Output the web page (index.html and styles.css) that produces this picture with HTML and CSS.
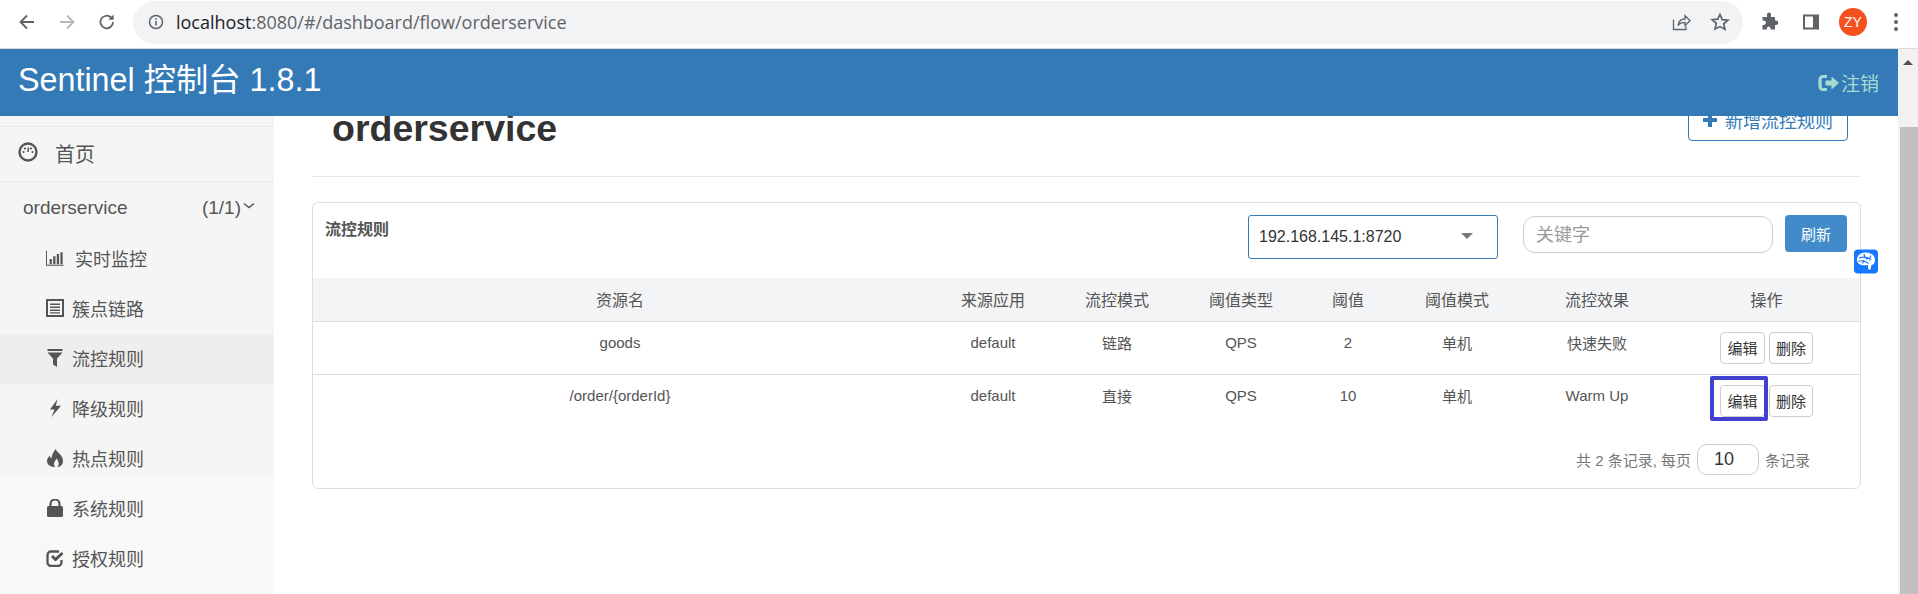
FILE: index.html
```html
<!DOCTYPE html>
<html>
<head>
    <meta charset="utf-8" />
    <title>Sentinel 控制台</title>
    <link rel="stylesheet" href="styles.css">
</head>
<body>
    <!--Browser toolbar-->
    <div class="toolbar">
        <svg class="tool-icon" viewBox="0 0 20 20"><path d="M17 10H4M10 3.5 3.5 10l6.5 6.5" fill="none" stroke="#5f6368" stroke-width="1.8"/></svg>
        <svg class="tool-icon" viewBox="0 0 20 20"><path d="M3 10h13M10 3.5l6.5 6.5-6.5 6.5" fill="none" stroke="#b4b6b9" stroke-width="1.8"/></svg>
        <svg class="tool-icon" viewBox="0 0 20 20"><path d="M16 10a6.3 6.3 0 1 1-1.9-4.5" fill="none" stroke="#5f6368" stroke-width="1.8"/><path d="M16.6 2.6v5.2h-5.2z" fill="#5f6368"/></svg>
        <div class="address">
            <svg class="info-icon" viewBox="0 0 16 16"><circle cx="8" cy="8" r="6.5" fill="none" stroke="#5f6368" stroke-width="1.5"/><path d="M7.2 7h1.6v4.6H7.2zM7.2 4.2h1.6v1.6H7.2z" fill="#5f6368"/></svg>
            <span class="url"><span class="url-host">localhost</span>:8080/#/dashboard/flow/orderservice</span>
            <svg class="share-icon" viewBox="0 0 20 20"><path d="M2.5 7.5v10h12.5v-3M7 13.5c.5-4 3-6.500 7-6.500V3.500l5 5.200-5 5V10.300c-3 0-5.500 1-7 3.200z" fill="none" stroke="#5f6368" stroke-width="1.300"/></svg>
            <svg class="star-icon" viewBox="0 0 20 20"><path d="M10 2.500l2.300 5.200 5.600.5-4.200 3.700 1.300 5.500L10 14.600l-5 2.300 1.300-5.500-4.200-3.700 5.600-.5z" fill="none" stroke="#5f6368" stroke-width="1.700"/></svg>
        </div>
        <svg class="puzzle-icon" viewBox="0 0 20 20"><path d="M8 2.500a2 2 0 0 1 4 0V5h4v3.500h1a2.300 2.300 0 0 1 0 4.600h-1V17.500H11.500v-1.300a1.800 1.800 0 0 0-3.600 0v1.300H3.500V13h1.200a2.200 2.200 0 0 0 0-4.400H3.500V5H8z" fill="#5f6368"/></svg>
        <svg class="panel-icon" viewBox="0 0 18 18"><rect x="1" y="1.500" width="16" height="15" fill="#5f6368"/><rect x="3" y="3.500" width="8" height="11" fill="#fff"/></svg>
        <span class="avatar">ZY</span>
        <svg class="dots-icon" viewBox="0 0 6 20"><circle cx="3" cy="3" r="2" fill="#5f6368"/><circle cx="3" cy="10" r="2" fill="#5f6368"/><circle cx="3" cy="17" r="2" fill="#5f6368"/></svg>
    </div>

    <div class="window">
        <div class="app">
            <div class="navbar">
                <span class="brand">Sentinel 控制台 1.8.1</span>
                <span class="logout">
                    <svg class="logout-icon" viewBox="0 0 22 18"><path d="M9 2.500H5A3 3 0 0 0 2 5.500v7a3 3 0 0 0 3 3h4" fill="none" stroke="#a5dcd2" stroke-width="3.200"/><path d="M7.500 6.500h6V2.500L21 9l-7.500 6.500v-4h-6z" fill="#a5dcd2"/></svg>
                    注销
                </span>
            </div>
            <div class="body">
                <!--Sidebar-->
                <div class="sidebar">
                    <div class="home">
                        <svg class="home-icon" viewBox="0 0 20 20"><circle cx="10" cy="10" r="8.500" fill="none" stroke="#555" stroke-width="2.400"/><circle cx="5.500" cy="10" r="1.100" fill="#555"/><circle cx="7" cy="6.500" r="1.100" fill="#555"/><circle cx="13" cy="6.500" r="1.100" fill="#555"/><circle cx="14.500" cy="10" r="1.100" fill="#555"/><path d="M10.500 5.500 10 10" stroke="#555" stroke-width="1.600"/></svg>
                        首页
                    </div>
                    <div class="app-row">
                        <span>orderservice</span>
                        <span class="app-count">(1/1)<svg class="chevron" viewBox="0 0 12 8"><path d="M1 1.500l5 4 5-4" fill="none" stroke="#555" stroke-width="1.500"/></svg></span>
                    </div>
                    <div class="menu-item">
                        <svg class="menu-icon" viewBox="0 0 20 18"><path d="M.5 1v16h19" fill="none" stroke="#555" stroke-width="1.200"/><path d="M4 10h2.500v6H4zM8 7h2.500v9H8zM12 4.500h2.500V16H12zM16 2.500h2.500V16H16z" fill="#555"/></svg>
                        <span class="menu-text-wide">实时监控</span>
                    </div>
                    <div class="menu-item">
                        <svg class="menu-icon" viewBox="0 0 18 18"><rect x="1" y="1" width="16" height="16" fill="none" stroke="#555" stroke-width="2"/><path d="M4 4.500h10v1.500H4zM4 7.500h10V9H4zM4 10.500h10V12H4zM4 13.200h10v1.300H4z" fill="#555"/></svg>
                        簇点链路
                    </div>
                    <div class="menu-item active">
                        <svg class="menu-icon" viewBox="0 0 18 18"><path d="M1.500 0h15v2h-15zM1.500 3.500h15L11 9.500V18l-4-2.500v-6z" fill="#555"/></svg>
                        流控规则
                    </div>
                    <div class="menu-item">
                        <svg class="menu-icon" viewBox="0 0 18 18"><path d="M11.500 0 4 10.500h4.500L5.500 18 15 6.800h-5.200z" fill="#555"/></svg>
                        降级规则
                    </div>
                    <div class="menu-item">
                        <svg class="menu-icon" viewBox="0 0 18 18"><path d="M9.500 0c1.500 3.500 7.500 6 7.500 12 0 3.500-2.500 6-5.500 6 2-2.500 1.500-5.500-1-8.500-.5 2-2.500 3-2.500 5.500 0 1.300.5 2.300 1.300 3C5 18 1 16 1 12c0-2.500 1.500-4 2.800-5.500.2 1.500.7 2.300 1.700 3C5.500 6 7.500 3 9.500 0z" fill="#555"/></svg>
                        热点规则
                    </div>
                    <div class="menu-item">
                        <svg class="menu-icon" viewBox="0 0 18 18"><path d="M4.500 7.500V5a4.500 4.500 0 0 1 9 0v2.500" fill="none" stroke="#555" stroke-width="2.200"/><rect x="1" y="7" width="16" height="11" rx="1.500" fill="#555"/></svg>
                        系统规则
                    </div>
                    <div class="menu-item">
                        <svg class="menu-icon" viewBox="0 0 18 18"><path d="M13 2.500H5A3.500 3.500 0 0 0 1.500 6v7.500A3.500 3.500 0 0 0 5 17h7a3.500 3.500 0 0 0 3.500-3.500V11" fill="none" stroke="#555" stroke-width="2.300"/><path d="M5 8l2-2 2.500 2.500L15.500 3l2 2-8 7.500z" fill="#555"/></svg>
                        授权规则
                    </div>
                </div>

                <!--Content-->
                <div class="main">
                    <div class="page-head">
                        <h1 class="page-title">orderservice</h1>
                        <button class="add-btn">
                            <svg class="add-icon" viewBox="0 0 14 14"><path d="M5 0h4v5h5v4H9v5H5V9H0V5h5z" fill="#337ab7"/></svg>
                            新增流控规则
                        </button>
                    </div>
                    <div class="panel">
                        <div class="panel-head">
                            <span class="panel-title">流控规则</span>
                            <div class="select">
                                <span>192.168.145.1:8720</span>
                                <i class="caret"></i>
                            </div>
                            <div class="search">关键字</div>
                            <button class="refresh-btn">刷新</button>
                        </div>
                        <table class="rules">
                            <colgroup>
                                <col class="col-res"><col class="col-app"><col class="col-mode"><col class="col-app">
                                <col class="col-val"><col class="col-cluster"><col class="col-effect"><col class="col-ops">
                            </colgroup>
                            <thead>
                                <tr>
                                    <th>资源名</th><th>来源应用</th><th>流控模式</th><th>阈值类型</th>
                                    <th>阈值</th><th>阈值模式</th><th>流控效果</th><th class="ops">操作</th>
                                </tr>
                            </thead>
                            <tbody>
                                <tr>
                                    <td>goods</td><td>default</td><td>链路</td><td>QPS</td>
                                    <td>2</td><td>单机</td><td>快速失败</td>
                                    <td class="ops"><button class="row-btn">编辑</button><button class="row-btn del-btn">删除</button></td>
                                </tr>
                                <tr>
                                    <td>/order/{orderId}</td><td>default</td><td>直接</td><td>QPS</td>
                                    <td>10</td><td>单机</td><td>Warm Up</td>
                                    <td class="ops"><button class="row-btn marked">编辑</button><button class="row-btn del-btn">删除</button></td>
                                </tr>
                            </tbody>
                        </table>
                        <div class="pager">
                            共 2 条记录, 每页
                            <span class="page-size">10</span>
                            条记录
                        </div>
                    </div>
                    <div class="float-widget">
                        <svg viewBox="0 0 24 24" width="24" height="25"><rect width="24" height="24" rx="4" fill="#1677ff"/><path d="M3 11c-.5-4.500 3-8 8.500-8S21.500 6 21 11c-.3 3-2 4.500-3.500 4.500l-1 4.500c-1 .5-2.500 0-2.500-1.500v-3C8 16.500 3.500 15 3 11z" fill="#fff"/><path d="M5 8.500c4-1.500 8-1 12 1.500M4.500 12c3.500-1.500 7-.5 10 2M10 4.500c0 2.500 1.500 4 3.500 5.500M10 10.500l-1.500 3.500M17 6c-1 1.500-1.500 3-1 5" fill="none" stroke="#1677ff" stroke-width="1.200"/></svg>
                    </div>
                </div>
            </div>
        </div>
        <div class="scrollbar">
            <i class="scroll-up"></i>
            <div class="scroll-thumb"></div>
        </div>
    </div>
</body>
</html>
```

FILE: styles.css
```css
* {
    box-sizing: border-box;
}

html, body {
    margin: 0;
    height: 100%;
    overflow: hidden;
}

body {
    display: flex;
    flex-direction: column;
    background: #fff;
    color: #555;
    font-family: "Liberation Sans", "Noto Sans CJK SC", sans-serif;
    font-size: 15px;
}

button {
    font-family: inherit;
    cursor: pointer;
}

/* browser toolbar */
.toolbar {
    height: 49px;
    flex: none;
    display: flex;
    align-items: center;
    padding: 0 0 4px 17px;
    border-bottom: 1px solid #dadce0;
}

.tool-icon {
    width: 20px;
    height: 20px;
    margin-right: 20px;
}

.address {
    width: 1610px;
    height: 43px;
    margin-left: -4px;
    display: flex;
    align-items: center;
    padding: 0 0 0 15px;
    background: #f1f3f4;
    border-radius: 22px;
}

.info-icon {
    width: 16px;
    height: 16px;
}

.url {
    flex: 1;
    margin-left: 12px;
    color: #5f6368;
    font-family: "Open Sans", sans-serif;
    font-size: 18px;
}

.url-host {
    color: #202124;
}

.share-icon {
    width: 20px;
    height: 20px;
    margin-right: 19px;
}

.star-icon {
    width: 20px;
    height: 20px;
    margin-right: 13px;
}

.puzzle-icon {
    width: 20px;
    height: 20px;
    margin-left: 16px;
}

.panel-icon {
    width: 18px;
    height: 18px;
    margin-left: 23px;
}

.avatar {
    width: 28px;
    height: 28px;
    margin-left: 19px;
    border-radius: 50%;
    background: #f4511e;
    color: #fff;
    font-size: 14px;
    text-align: center;
    line-height: 28px;
}

.dots-icon {
    width: 6px;
    height: 20px;
    margin-left: 26px;
}

/* page */
.window {
    flex: 1;
    display: flex;
    min-height: 0;
}

.app {
    flex: 1;
    display: flex;
    flex-direction: column;
    min-width: 0;
}

.navbar {
    height: 67px;
    flex: none;
    display: flex;
    align-items: center;
    justify-content: space-between;
    padding: 0 19px 11px 18px;
    background: #337ab7;
}

.brand {
    color: #fff;
    font-size: 32.3px;
}

.logout {
    display: flex;
    align-items: center;
    gap: 1px;
    padding-top: 11px;
    color: #a5dcd2;
    font-size: 19px;
}

.logout-icon {
    width: 22px;
    height: 18px;
}

.body {
    flex: 1;
    display: flex;
    min-height: 0;
}

/* sidebar */
.sidebar {
    width: 274px;
    flex: none;
    padding-top: 10px;
    background: linear-gradient(#f5f5f5 358px, #f8f8f8 358px);
    font-size: 18px;
}

.home {
    height: 56px;
    display: flex;
    align-items: center;
    gap: 17px;
    padding: 0 0 2px 18px;
    border-top: 1px solid #e7e7e7;
    border-bottom: 1px solid #e7e7e7;
    font-size: 20px;
}

.home-icon {
    width: 20px;
    height: 20px;
    margin-top: -3px;
}

.app-row {
    height: 52px;
    display: flex;
    align-items: center;
    justify-content: space-between;
    padding: 0 19px 0 23px;
    font-size: 19px;
}

.app-count {
    display: flex;
    align-items: flex-start;
}

.chevron {
    width: 12px;
    height: 8px;
    margin: 5px 0 0 2px;
}

.menu-item {
    height: 50px;
    display: flex;
    align-items: center;
    gap: 8px;
    padding: 0 0 2px 46px;
}

.menu-item.active {
    background: #eee;
}

.menu-icon {
    width: 18px;
    height: 18px;
}

.menu-text-wide {
    margin-left: 3px;
}

/* content */
.main {
    position: relative;
    flex: 1;
    min-width: 0;
    padding: 0 37px 0 38px;
    overflow: hidden;
}

.page-head {
    height: 61px;
    display: flex;
    justify-content: space-between;
    align-items: flex-end;
    padding: 0 13px 0 20px;
    border-bottom: 1px solid #e7e7e7;
}

.page-title {
    margin: 0 0 28px;
    color: #333;
    font-size: 37.5px;
    line-height: 40px;
}

.add-btn {
    width: 160px;
    height: 42px;
    margin-bottom: 35px;
    display: flex;
    align-items: center;
    justify-content: center;
    gap: 8px;
    border: 1px solid #337ab7;
    border-radius: 4px;
    background: #fff;
    color: #337ab7;
    font-size: 18px;
}

.add-icon {
    width: 14px;
    height: 14px;
}

.panel {
    margin-top: 25px;
    height: 287px;
    border: 1px solid #ddd;
    border-radius: 6px;
}

.panel-head {
    height: 75px;
    display: flex;
    align-items: flex-start;
    padding: 12px 13px 0 12px;
}

.panel-title {
    flex: 1;
    margin-top: 1px;
    font-size: 16px;
    font-weight: bold;
}

.select {
    width: 250px;
    height: 44px;
    display: flex;
    align-items: center;
    justify-content: space-between;
    padding: 0 24px 0 10px;
    border: 1px solid #337ab7;
    border-radius: 3px;
    color: #333;
    font-size: 16px;
}

.caret {
    width: 0;
    height: 0;
    margin-bottom: 2px;
    border-left: 6px solid transparent;
    border-right: 6px solid transparent;
    border-top: 6px solid #777;
}

.search {
    width: 250px;
    height: 37px;
    margin: 1px 0 0 25px;
    padding: 0 12px;
    border: 1px solid #ccc;
    border-radius: 12px;
    color: #999;
    font-size: 18px;
    line-height: 36px;
}

.refresh-btn {
    width: 62px;
    height: 37px;
    margin-left: 12px;
    border: 0;
    border-radius: 4px;
    background: #428bca;
    color: #fff;
    font-size: 15px;
}

.rules {
    width: 100%;
    table-layout: fixed;
    border-collapse: collapse;
    text-align: center;
    font-size: 15px;
}

.col-res { width: 614px; }
.col-app { width: 132px; }
.col-mode { width: 116px; }
.col-val { width: 82px; }
.col-cluster { width: 136px; }
.col-effect { width: 144px; }

.rules thead {
    background: #f3f4f6;
}

.rules th {
    height: 43px;
    padding: 0;
    border-bottom: 1px solid #ddd;
    font-size: 16px;
    font-weight: normal;
}

.rules td {
    height: 53px;
    padding: 0 0 10px;
    vertical-align: middle;
}

.rules tbody tr:first-child td {
    border-bottom: 1px solid #ddd;
}

.rules .ops {
    padding-left: 4px;
}

.rules td.ops {
    padding-top: 0;
    padding-bottom: 0;
    font-size: 0;
}

.row-btn {
    position: relative;
    width: 45px;
    height: 32px;
    padding: 0;
    border: 1px solid #ccc;
    border-radius: 4px;
    background: #fff;
    color: #333;
    font-size: 15px;
}

.del-btn {
    width: 44px;
    margin-left: 4px;
}

/* hand-drawn highlight over the button */
.marked::after {
    content: "";
    position: absolute;
    top: -10px;
    left: -11px;
    right: -4px;
    bottom: -5px;
    border: 4px solid #4141d1;
    border-radius: 2px;
}

.pager {
    display: flex;
    align-items: center;
    justify-content: flex-end;
    gap: 6px;
    height: 36px;
    margin-top: 14px;
    padding-right: 50px;
    color: #777;
    font-size: 15px;
}

.page-size {
    width: 62px;
    height: 31px;
    padding-left: 16px;
    border: 1px solid #ccc;
    border-radius: 10px;
    color: #333;
    font-size: 18px;
    line-height: 29px;
}

.float-widget {
    position: absolute;
    top: 133px;
    right: 20px;
    width: 24px;
    height: 25px;
}

/* scrollbar */
.scrollbar {
    width: 20px;
    flex: none;
    background: #f1f1f1;
    padding-top: 11px;
}

.scroll-up {
    display: block;
    width: 0;
    height: 0;
    margin: 0 0 0 5px;
    border-left: 5px solid transparent;
    border-right: 5px solid transparent;
    border-bottom: 5px solid #505050;
}

.scroll-thumb {
    height: 470px;
    margin: 62px 0 0 2px;
    background: #c1c1c1;
}
```
